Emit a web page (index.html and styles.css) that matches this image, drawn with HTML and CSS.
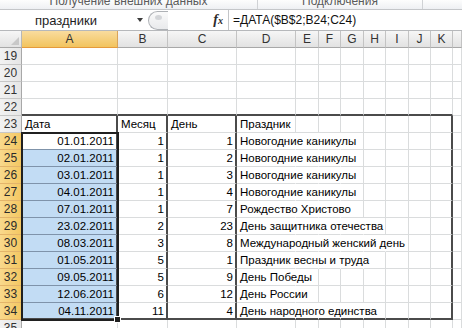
FILE: index.html
```html
<!DOCTYPE html>
<html lang="ru">
<head>
<meta charset="utf-8">
<title>Excel</title>
<link rel="stylesheet" href="styles.css">
</head>
<body>
<div class="strip">
  <div class="grp g1"><span class="lbl">Получение внешних данных</span></div>
  <div class="grp g2"><span class="lbl">Подключения</span></div>
  <div class="grp g3"></div>
</div>
<div class="fbar">
  <div class="namebox"><span class="nm">праздники</span><span class="arrow"></span></div>
  <div class="grip"><span class="dot"></span></div>
  <div class="fxzone"><span class="fx">f<span class="fxs">x</span></span></div>
  <div class="formula">=ДАТА($B$2;B24;C24)</div>
</div>
<div class="sheet">
  <div class="corner"></div><div class="ch hl">A</div><div class="ch">B</div><div class="ch">C</div><div class="ch">D</div><div class="ch">E</div><div class="ch">F</div><div class="ch">G</div><div class="ch">H</div><div class="ch">I</div><div class="ch">J</div><div class="ch">K</div><div class="ch"></div>

  <div class="rh">19</div><div class="c"></div><div class="c"></div><div class="c"></div><div class="c"></div><div class="c"></div><div class="c"></div><div class="c"></div><div class="c"></div><div class="c"></div><div class="c"></div><div class="c"></div><div class="c"></div>
  <div class="rh">20</div><div class="c"></div><div class="c"></div><div class="c"></div><div class="c"></div><div class="c"></div><div class="c"></div><div class="c"></div><div class="c"></div><div class="c"></div><div class="c"></div><div class="c"></div><div class="c"></div>
  <div class="rh">21</div><div class="c"></div><div class="c"></div><div class="c"></div><div class="c"></div><div class="c"></div><div class="c"></div><div class="c"></div><div class="c"></div><div class="c"></div><div class="c"></div><div class="c"></div><div class="c"></div>
  <div class="rh">22</div><div class="c db"></div><div class="c db"></div><div class="c db"></div><div class="c db"></div><div class="c db"></div><div class="c db"></div><div class="c db"></div><div class="c db"></div><div class="c db"></div><div class="c db"></div><div class="c db"></div><div class="c"></div>

  <div class="rh">23</div><div class="c dr">Дата</div><div class="c dr">Месяц</div><div class="c dr">День</div><div class="c">Праздник</div><div class="c"></div><div class="c"></div><div class="c"></div><div class="c"></div><div class="c"></div><div class="c"></div><div class="c dr"></div><div class="c"></div>

  <div class="rh hl">24</div><div class="c act dr r">01.01.2011</div><div class="c dr r">1</div><div class="c dr r">1</div><div class="c ng">Новогодние каникулы</div><div class="c ng"></div><div class="c ng"></div><div class="c"></div><div class="c"></div><div class="c"></div><div class="c"></div><div class="c dr"></div><div class="c"></div>
  <div class="rh hl">25</div><div class="c sel dr r">02.01.2011</div><div class="c dr r">1</div><div class="c dr r">2</div><div class="c ng">Новогодние каникулы</div><div class="c ng"></div><div class="c ng"></div><div class="c"></div><div class="c"></div><div class="c"></div><div class="c"></div><div class="c dr"></div><div class="c"></div>
  <div class="rh hl">26</div><div class="c sel dr r">03.01.2011</div><div class="c dr r">1</div><div class="c dr r">3</div><div class="c ng">Новогодние каникулы</div><div class="c ng"></div><div class="c ng"></div><div class="c"></div><div class="c"></div><div class="c"></div><div class="c"></div><div class="c dr"></div><div class="c"></div>
  <div class="rh hl">27</div><div class="c sel dr r">04.01.2011</div><div class="c dr r">1</div><div class="c dr r">4</div><div class="c ng">Новогодние каникулы</div><div class="c ng"></div><div class="c ng"></div><div class="c"></div><div class="c"></div><div class="c"></div><div class="c"></div><div class="c dr"></div><div class="c"></div>
  <div class="rh hl">28</div><div class="c sel dr r">07.01.2011</div><div class="c dr r">1</div><div class="c dr r">7</div><div class="c ng">Рождество Христово</div><div class="c ng"></div><div class="c ng"></div><div class="c"></div><div class="c"></div><div class="c"></div><div class="c"></div><div class="c dr"></div><div class="c"></div>
  <div class="rh hl">29</div><div class="c sel dr r">23.02.2011</div><div class="c dr r">2</div><div class="c dr r">23</div><div class="c ng">День защитника отечества</div><div class="c ng"></div><div class="c ng"></div><div class="c ng"></div><div class="c"></div><div class="c"></div><div class="c"></div><div class="c dr"></div><div class="c"></div>
  <div class="rh hl">30</div><div class="c sel dr r">08.03.2011</div><div class="c dr r">3</div><div class="c dr r">8</div><div class="c ng">Международный женский день</div><div class="c ng"></div><div class="c ng"></div><div class="c ng"></div><div class="c ng"></div><div class="c"></div><div class="c"></div><div class="c dr"></div><div class="c"></div>
  <div class="rh hl">31</div><div class="c sel dr r">01.05.2011</div><div class="c dr r">5</div><div class="c dr r">1</div><div class="c ng">Праздник весны и труда</div><div class="c ng"></div><div class="c ng"></div><div class="c ng"></div><div class="c"></div><div class="c"></div><div class="c"></div><div class="c dr"></div><div class="c"></div>
  <div class="rh hl">32</div><div class="c sel dr r">09.05.2011</div><div class="c dr r">5</div><div class="c dr r">9</div><div class="c ng">День Победы</div><div class="c"></div><div class="c"></div><div class="c"></div><div class="c"></div><div class="c"></div><div class="c"></div><div class="c dr"></div><div class="c"></div>
  <div class="rh hl">33</div><div class="c sel dr r">12.06.2011</div><div class="c dr r">6</div><div class="c dr r">12</div><div class="c ng">День России</div><div class="c"></div><div class="c"></div><div class="c"></div><div class="c"></div><div class="c"></div><div class="c"></div><div class="c dr"></div><div class="c"></div>
  <div class="rh hl">34</div><div class="c sel dr db r">04.11.2011</div><div class="c dr db r">11</div><div class="c dr db r">4</div><div class="c ng db">День народного единства</div><div class="c ng db"></div><div class="c ng db"></div><div class="c ng db"></div><div class="c db"></div><div class="c db"></div><div class="c db"></div><div class="c dr db"></div><div class="c"></div>

  <div class="rh">35</div><div class="c"></div><div class="c"></div><div class="c"></div><div class="c"></div><div class="c"></div><div class="c"></div><div class="c"></div><div class="c"></div><div class="c"></div><div class="c"></div><div class="c"></div><div class="c"></div>

  <div class="selbox"><span class="handle"></span></div>
</div>
</body>
</html>
```
FILE: styles.css
```css
html, body {
  margin: 0;
  padding: 0;
}
body {
  width: 462px;
  height: 328px;
  overflow: hidden;
  background: #fff;
  font-family: "Liberation Sans", Arial, sans-serif;
  color: #000;
}

/* ribbon group labels strip */
.strip {
  height: 10px;
  box-sizing: border-box;
  border-bottom: 1px solid #c4c6c9;
  background: linear-gradient(#fdfdfd, #eef0f3);
  display: flex;
  overflow: hidden;
}
.grp {
  box-sizing: border-box;
  text-align: center;
  font-size: 12px;
  line-height: 10px;
  color: #5b5b5b;
  overflow: hidden;
}
.g1 { width: 258px; border-right: 1px solid #d0d2d5; }
.g2 { width: 165px; border-right: 1px solid #d0d2d5; }
.g3 { flex: 1; }
.lbl {
  display: block;
  margin-top: -4px;
  white-space: nowrap;
}

/* formula bar */
.fbar {
  height: 21px;
  box-sizing: border-box;
  border-bottom: 1px solid #b6b8bb;
  display: flex;
  background: #fff;
}
.namebox {
  width: 148px;
  display: flex;
  align-items: center;
  font-size: 13px;
  color: #1e1e1e;
}
.nm {
  width: 132px;
  text-align: center;
}
.arrow {
  width: 0;
  height: 0;
  margin-left: 5px;
  border-left: 3px solid transparent;
  border-right: 3px solid transparent;
  border-top: 4px solid #3c3c3c;
}
.grip {
  width: 20px;
  height: 19px;
  box-sizing: border-box;
  align-self: center;
  border: 1px solid #aeb1b5;
  border-right: none;
  border-radius: 10px 0 0 10px;
  background: linear-gradient(#fafafa, #e9eaec);
  display: flex;
  align-items: flex-start;
  padding: 3px 0 0 6px;
}
.dot {
  width: 7px;
  height: 5px;
  border-radius: 50%;
  background: #d3d5d8;
}
.fxzone {
  width: 60px;
  display: flex;
  align-items: center;
  justify-content: flex-end;
  padding-right: 5px;
  box-sizing: border-box;
}
.fx {
  font-family: "Liberation Serif", "Times New Roman", serif;
  font-style: italic;
  font-weight: bold;
  font-size: 14px;
  color: #2a2a2a;
  line-height: 14px;
}
.fxs {
  font-size: 10px;
}
.formula {
  flex: 1;
  border-left: 1px solid #c3c5c8;
  font-size: 12px;
  line-height: 20px;
  padding-left: 4px;
  color: #111;
  white-space: nowrap;
}

/* sheet grid */
.sheet {
  position: relative;
  display: grid;
  grid-template-columns: 22px 96px 50px 69px 59px 23px 22px 23px 22px 23px 22px 22px 9px;
  grid-auto-rows: 17px;
}
.corner {
  position: relative;
  background: linear-gradient(#f6f6f6, #e2e2e2);
  border-right: 1px solid #b7b7b7;
  border-bottom: 1px solid #a8a8a8;
  box-sizing: border-box;
}
.corner::after {
  content: "";
  position: absolute;
  right: 2px;
  bottom: 2px;
  width: 8px;
  height: 8px;
  background: #c8c8c8;
  clip-path: polygon(100% 0, 100% 100%, 0 100%);
}
.ch {
  box-sizing: border-box;
  background: linear-gradient(#f6f6f6, #e2e2e2);
  border-right: 1px solid #c3c3c3;
  border-bottom: 1px solid #a8a8a8;
  text-align: center;
  font-size: 12px;
  line-height: 16px;
  color: #333;
}
.ch.hl {
  background: linear-gradient(#f9dc9e, #f2c45e);
  border-bottom-color: #e59a3c;
  border-right-color: #d9a35a;
}
.rh {
  box-sizing: border-box;
  background: linear-gradient(90deg, #f2f2f2, #e6e6e6);
  border-right: 1px solid #a8a8a8;
  border-bottom: 1px solid #c7c7c7;
  text-align: center;
  font-size: 12px;
  line-height: 17px;
  color: #333;
}
.rh.hl {
  background: linear-gradient(90deg, #f9d98c, #f4c762);
  border-right-color: #e09a3e;
  border-bottom-color: #e3b46a;
  color: #2b2b2b;
}
.c {
  box-sizing: border-box;
  border-right: 1px solid #dadcdd;
  border-bottom: 1px solid #dadcdd;
  font-size: 11.5px;
  line-height: 16px;
  padding: 0 2px 0 3px;
  white-space: nowrap;
  overflow: visible;
}
.r { text-align: right; }
.ng { border-right-color: transparent; }
.sel {
  background: #c2dcf4;
  border-bottom-color: #7f93aa;
}
.act { background: #fff; border-bottom-color: #7f93aa; }
.dr { border-right: 2px solid #4b4b4b; }
.db { border-bottom: 2px solid #4b4b4b; }

.selbox {
  position: absolute;
  left: 21px;
  top: 101px;
  width: 98px;
  height: 189px;
  box-sizing: border-box;
  border: 2px solid #202020;
  pointer-events: none;
}
.handle {
  position: absolute;
  right: -4px;
  bottom: -4px;
  width: 5px;
  height: 5px;
  background: #202020;
  border: 1px solid #fff;
}
```
